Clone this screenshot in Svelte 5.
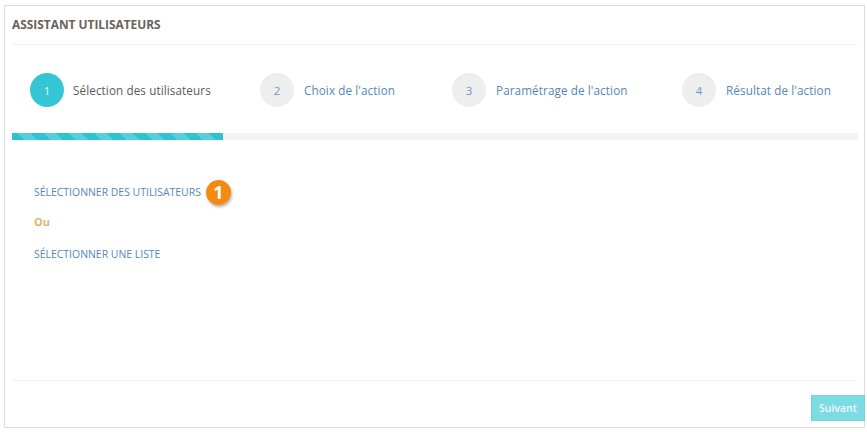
<script lang="ts">
  const steps = [
    { n: 1, label: "Sélection des utilisateurs", active: true },
    { n: 2, label: "Choix de l'action", active: false },
    { n: 3, label: "Paramétrage de l'action", active: false },
    { n: 4, label: "Résultat de l'action", active: false },
  ];
</script>

<div class="page">
  <div class="panel">
    <div class="title">ASSISTANT UTILISATEURS</div>

    <div class="steps">
      {#each steps as s}
        <div class="step" class:active={s.active}>
          <span class="num">{s.n}</span>
          <span class="label">{s.label}</span>
        </div>
      {/each}
    </div>

    <div class="progress"><div class="bar"></div></div>

    <div class="content">
      <div class="row">
        <span class="link">SÉLECTIONNER DES UTILISATEURS</span>
        <span class="badge">1</span>
      </div>
      <div class="or">Ou</div>
      <div class="link">SÉLECTIONNER UNE LISTE</div>
    </div>

    <div class="footer">
      <button class="next">Suivant</button>
    </div>
  </div>
</div>

<style>
  :global(body) {
    margin: 0;
    background: #fff;
  }

  .page {
    width: 867px;
    height: 432px;
    padding: 5px 2px 4px 4px;
    box-sizing: border-box;
    font-family: "Open Sans", "Noto Sans", sans-serif;
  }

  .panel {
    height: 100%;
    box-sizing: border-box;
    border: 1px solid #dcdcdc;
    padding: 0 0 0 7px;
    display: flex;
    flex-direction: column;
  }

  .title {
    height: 39px;
    margin-right: 6px;
    line-height: 37px;
    font-size: 11.9px;
    font-weight: 700;
    color: #6a625c;
    border-bottom: 1px solid #f1f1f1;
    box-sizing: border-box;
  }

  .steps {
    display: grid;
    grid-template-columns: 230px 192px 230px 1fr;
    margin-top: 28px;
    padding-left: 18px;
    height: 34px;
  }

  .step {
    display: flex;
    align-items: center;
    gap: 10px;
  }

  .num {
    width: 34px;
    height: 34px;
    border-radius: 50%;
    background: #eeeeee;
    color: #6f97c4;
    font-size: 11.5px;
    display: flex;
    align-items: center;
    justify-content: center;
    flex: none;
  }

  .label {
    font-size: 11.7px;
    letter-spacing: 0.1px;
    color: #5387bb;
    white-space: nowrap;
  }

  .step.active {
    gap: 9px;
  }

  .step.active .num {
    background: #35c6d6;
    color: #e8f8fa;
  }

  .step.active .label {
    color: #5d5a58;
  }

  .progress {
    margin-top: 26px;
    margin-right: 6px;
    height: 7px;
    background: #f4f4f4;
  }

  .bar {
    width: 211px;
    height: 100%;
    background: repeating-linear-gradient(45deg, #2cc3d2 0 9px, #55cfdc 9px 18px);
  }

  .content {
    flex: 1;
    padding: 39px 0 0 22px;
  }

  .row {
    display: flex;
    align-items: center;
    gap: 5px;
    height: 26px;
  }

  .link {
    font-size: 10.45px;
    color: #5387bb;
    white-space: nowrap;
    line-height: 14px;
  }

  .badge {
    width: 25px;
    height: 25px;
    border-radius: 50%;
    background: #f58a12;
    color: #fff;
    font-size: 18px;
    font-weight: 700;
    display: flex;
    align-items: center;
    justify-content: center;
    box-shadow: 1px 2px 3px rgba(0, 0, 0, 0.3);
  }

  .or {
    font-size: 11px;
    font-weight: 700;
    color: #e0b568;
    margin: 9px 0 18px;
    line-height: 15px;
  }

  .footer {
    height: 47px;
    margin-right: 6px;
    border-top: 1px solid #f1f1f1;
    position: relative;
    box-sizing: border-box;
  }

  .next {
    position: absolute;
    right: -7px;
    top: 14px;
    width: 54px;
    height: 26px;
    border: 1px solid #6fd3de;
    background: #7ddbe4;
    color: #eefbfc;
    font-family: inherit;
    font-size: 10.5px;
    font-weight: 600;
    padding: 0;
  }
</style>
